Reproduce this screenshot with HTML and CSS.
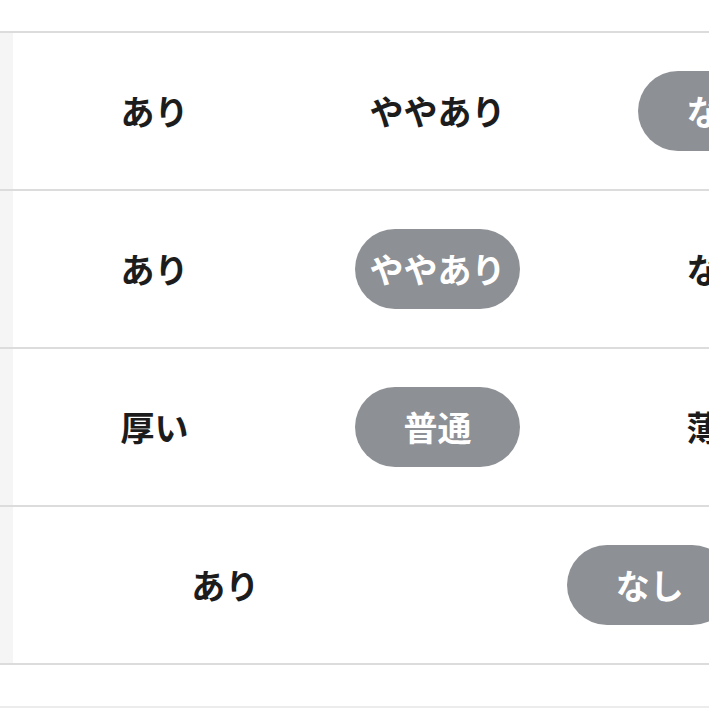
FILE: index.html
```html
<!DOCTYPE html>
<html lang="ja">
<head>
<meta charset="utf-8">
<link rel="stylesheet" href="styles.css">
</head>
<body>
<div class="page">
  <div class="table">
    <div class="row">
      <div class="side"></div>
      <div class="cell"><span class="val">あり</span></div>
      <div class="cell"><span class="val">ややあり</span></div>
      <div class="cell"><span class="val pill">なし</span></div>
    </div>
    <div class="row">
      <div class="side"></div>
      <div class="cell"><span class="val">あり</span></div>
      <div class="cell"><span class="val pill">ややあり</span></div>
      <div class="cell"><span class="val">なし</span></div>
    </div>
    <div class="row">
      <div class="side"></div>
      <div class="cell"><span class="val">厚い</span></div>
      <div class="cell"><span class="val pill">普通</span></div>
      <div class="cell"><span class="val">薄い</span></div>
    </div>
    <div class="row two">
      <div class="side"></div>
      <div class="cell wide"><span class="val">あり</span></div>
      <div class="cell wide"><span class="val pill">なし</span></div>
    </div>
  </div>
  <div class="after"></div>
</div>
</body>
</html>
```

FILE: styles.css
```css
html, body {
  margin: 0;
  padding: 0;
  background: #ffffff;
  overflow: hidden;
}
.page {
  width: 709px;
  height: 709px;
  overflow: hidden;
  padding-top: 31px;
  box-sizing: border-box;
}
.table {
  width: 862px;
  border-top: 2px solid #dcdcdc;
}
.row {
  display: flex;
  height: 156px;
  border-bottom: 2px solid #dcdcdc;
}
.side {
  width: 13px;
  flex: none;
  background: #f5f5f5;
}
.cell {
  width: 283px;
  flex: none;
  display: flex;
  align-items: center;
  justify-content: center;
  font-family: "Noto Sans CJK JP", "Noto Sans", sans-serif;
  font-weight: 700;
  font-size: 34px;
  color: #1c1c1c;
}
.cell.wide {
  width: 424.5px;
}
.val {
  display: inline-block;
  line-height: 1;
}
.pill {
  width: 165px;
  height: 80px;
  line-height: 80px;
  text-align: center;
  border-radius: 40px;
  background: #8d9095;
  color: #ffffff;
}
.after {
  height: 41px;
  border-bottom: 2px solid #ececec;
}
```
